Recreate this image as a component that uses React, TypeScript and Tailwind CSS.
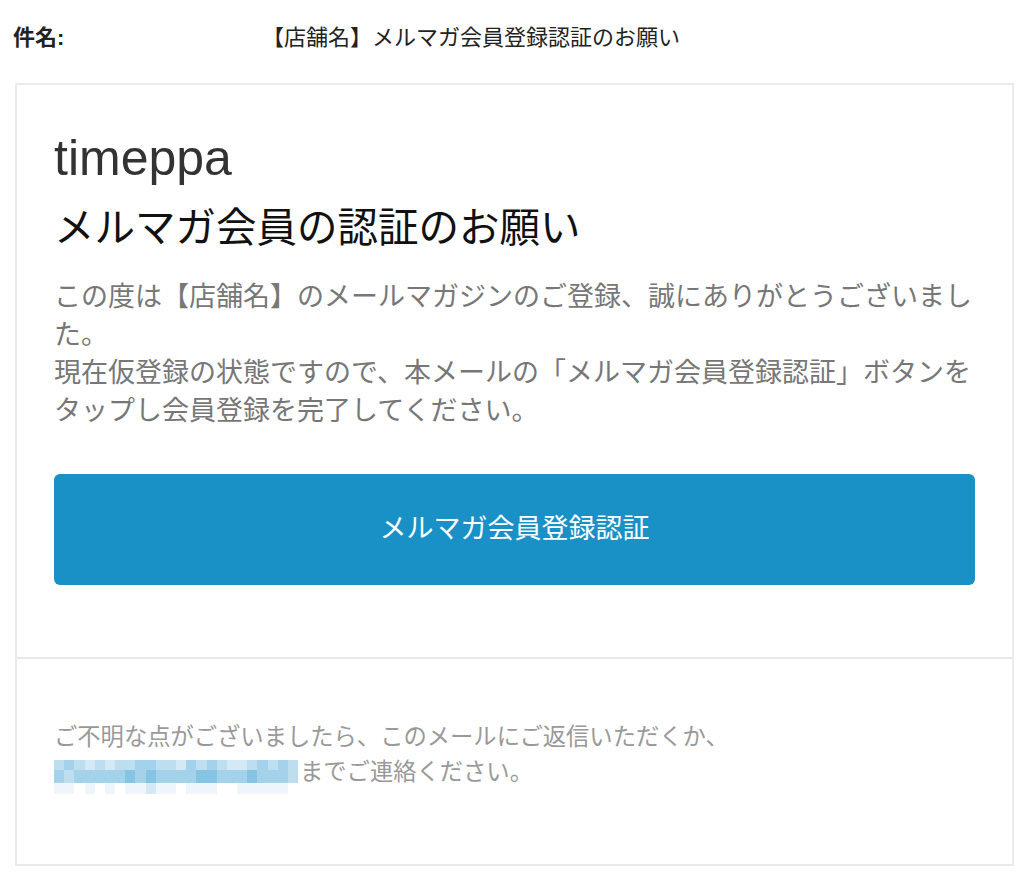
const mosaicColors = [
  "bg-[#ffffff]",
  "bg-[#eef6fb]",
  "bg-[#d3e9f5]",
  "bg-[#bcdeef]",
  "bg-[#a3d2ea]",
  "bg-[#86c4e4]",
];

// pixelated (blurred) e-mail address
const mosaicRows = [
  { h: "h-[10px]", cells: "343232334433243432234343" },
  { h: "h-[13px]", cells: "434444454544445544454443" },
  { h: "h-[11px]", cells: "110101011211011100111110" },
];

function BlurredAddress() {
  return (
    <div className="mt-[5px] flex w-[244px] shrink-0 flex-col">
      {mosaicRows.map((row, r) => (
        <div key={r} className={`flex ${row.h}`}>
          {row.cells.split("").map((c, i) => (
            <div key={i} className={`flex-1 ${mosaicColors[Number(c)]}`} />
          ))}
        </div>
      ))}
    </div>
  );
}

export default function App() {
  return (
    <div className="min-h-[876px] bg-white font-['Liberation_Sans','Noto_Sans_CJK_JP',sans-serif]">
      <div className="flex h-[83px] pl-[13px] pt-[23px] text-[22px] leading-[30px] text-[#222]">
        <div className="w-[249px] font-bold">件名:</div>
        <div>【店舗名】メルマガ会員登録認証のお願い</div>
      </div>

      <div className="ml-[15px] w-[999px] border-2 border-[#ebebeb]">
        <div className="px-[37px] pt-[46px] pb-[72px]">
          <div className="text-[50px] leading-[55px] text-[#333]">timeppa</div>
          <h1 className="mt-[18px] text-[40.5px] leading-[48px] text-[#111]">
            メルマガ会員の認証のお願い
          </h1>
          <p className="mt-[26px] text-[27px] leading-[38px] text-[#777]">
            この度は【店舗名】のメールマガジンのご登録、誠にありがとうございました。
            <br />
            現在仮登録の状態ですので、本メールの「メルマガ会員登録認証」ボタンをタップし会員登録を完了してください。
          </p>
          <button
            type="button"
            className="mt-[44px] flex h-[111px] w-full items-center justify-center rounded-[6px] bg-[#1990c6] text-[27px] text-white"
          >
            メルマガ会員登録認証
          </button>
        </div>

        <div className="h-[2px] bg-[#e8e8e8]" />

        <div className="px-[37px] pt-[61px] pb-[70px] text-[23.3px] leading-[35px] text-[#999]">
          <div>ご不明な点がございましたら、このメールにご返信いただくか、</div>
          <div className="flex items-start">
            <BlurredAddress />
            <span className="ml-[2px]">までご連絡ください。</span>
          </div>
        </div>
      </div>
    </div>
  );
}
